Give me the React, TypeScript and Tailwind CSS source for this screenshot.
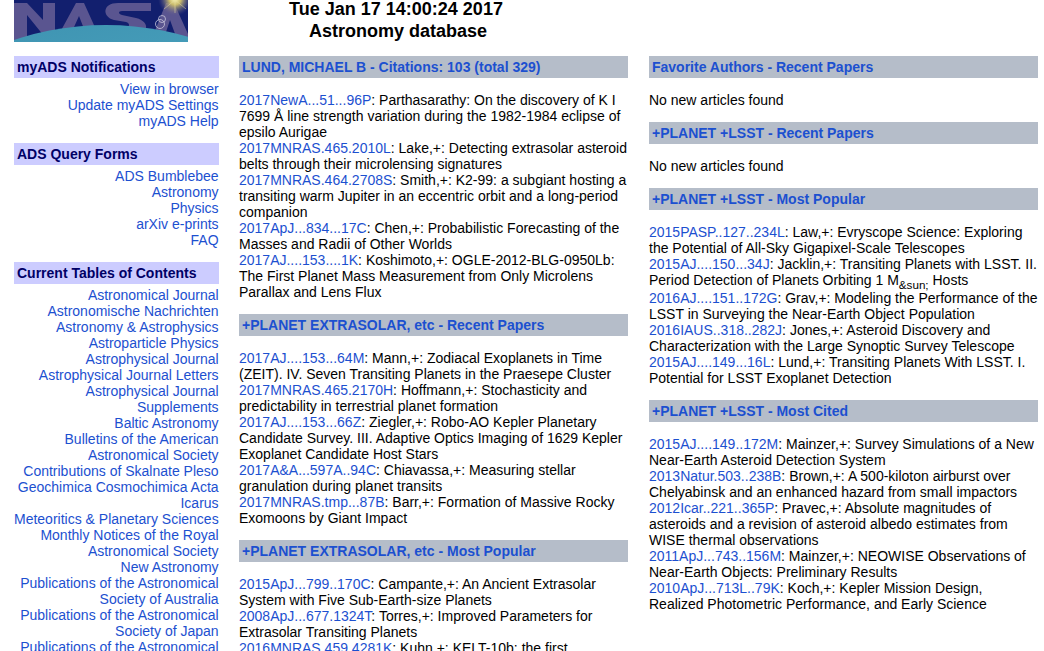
import { type ReactNode } from "react";

type Paper = { code: string; text: ReactNode };

const myads = ["View in browser", "Update myADS Settings", "myADS Help"];
const queryForms = ["ADS Bumblebee", "Astronomy", "Physics", "arXiv e-prints", "FAQ"];
const journals = [
  ["Astronomical Journal"],
  ["Astronomische Nachrichten"],
  ["Astronomy & Astrophysics"],
  ["Astroparticle Physics"],
  ["Astrophysical Journal"],
  ["Astrophysical Journal Letters"],
  ["Astrophysical Journal", "Supplements"],
  ["Baltic Astronomy"],
  ["Bulletins of the American", "Astronomical Society"],
  ["Contributions of Skalnate Pleso"],
  ["Geochimica Cosmochimica Acta"],
  ["Icarus"],
  ["Meteoritics & Planetary Sciences"],
  ["Monthly Notices of the Royal", "Astronomical Society"],
  ["New Astronomy"],
  ["Publications of the Astronomical", "Society of Australia"],
  ["Publications of the Astronomical", "Society of Japan"],
  ["Publications of the Astronomical", "Society of the Pacific"],
];

const citations: Paper[] = [
  { code: "2017NewA...51...96P", text: "Parthasarathy: On the discovery of K I 7699 Å line strength variation during the 1982-1984 eclipse of epsilo Aurigae" },
  { code: "2017MNRAS.465.2010L", text: "Lake,+: Detecting extrasolar asteroid belts through their microlensing signatures" },
  { code: "2017MNRAS.464.2708S", text: "Smith,+: K2-99: a subgiant hosting a transiting warm Jupiter in an eccentric orbit and a long-period companion" },
  { code: "2017ApJ...834...17C", text: "Chen,+: Probabilistic Forecasting of the Masses and Radii of Other Worlds" },
  { code: "2017AJ....153....1K", text: "Koshimoto,+: OGLE-2012-BLG-0950Lb: The First Planet Mass Measurement from Only Microlens Parallax and Lens Flux" },
];

const extraRecent: Paper[] = [
  { code: "2017AJ....153...64M", text: "Mann,+: Zodiacal Exoplanets in Time (ZEIT). IV. Seven Transiting Planets in the Praesepe Cluster" },
  { code: "2017MNRAS.465.2170H", text: "Hoffmann,+: Stochasticity and predictability in terrestrial planet formation" },
  { code: "2017AJ....153...66Z", text: "Ziegler,+: Robo-AO Kepler Planetary Candidate Survey. III. Adaptive Optics Imaging of 1629 Kepler Exoplanet Candidate Host Stars" },
  { code: "2017A&A...597A..94C", text: "Chiavassa,+: Measuring stellar granulation during planet transits" },
  { code: "2017MNRAS.tmp...87B", text: "Barr,+: Formation of Massive Rocky Exomoons by Giant Impact" },
];

const extraPopular: Paper[] = [
  { code: "2015ApJ...799..170C", text: "Campante,+: An Ancient Extrasolar System with Five Sub-Earth-size Planets" },
  { code: "2008ApJ...677.1324T", text: "Torres,+: Improved Parameters for Extrasolar Transiting Planets" },
  { code: "2016MNRAS.459.4281K", text: "Kuhn,+: KELT-10b: the first transiting exoplanet from the KELT-South survey" },
];

const lsstPopular: Paper[] = [
  { code: "2015PASP..127..234L", text: "Law,+: Evryscope Science: Exploring the Potential of All-Sky Gigapixel-Scale Telescopes" },
  {
    code: "2015AJ....150...34J",
    text: (
      <>
        Jacklin,+: Transiting Planets with LSST. II. Period Detection of Planets Orbiting 1 M
        <sub className="static align-sub text-[11.67px] leading-[11px]">&amp;sun;</sub> Hosts
      </>
    ),
  },
  { code: "2016AJ....151..172G", text: "Grav,+: Modeling the Performance of the LSST in Surveying the Near-Earth Object Population" },
  { code: "2016IAUS..318..282J", text: "Jones,+: Asteroid Discovery and Characterization with the Large Synoptic Survey Telescope" },
  { code: "2015AJ....149...16L", text: "Lund,+: Transiting Planets With LSST. I. Potential for LSST Exoplanet Detection" },
];

const lsstCited: Paper[] = [
  { code: "2015AJ....149..172M", text: "Mainzer,+: Survey Simulations of a New Near-Earth Asteroid Detection System" },
  { code: "2013Natur.503..238B", text: "Brown,+: A 500-kiloton airburst over Chelyabinsk and an enhanced hazard from small impactors" },
  { code: "2012Icar..221..365P", text: "Pravec,+: Absolute magnitudes of asteroids and a revision of asteroid albedo estimates from WISE thermal observations" },
  { code: "2011ApJ...743..156M", text: "Mainzer,+: NEOWISE Observations of Near-Earth Objects: Preliminary Results" },
  { code: "2010ApJ...713L..79K", text: "Koch,+: Kepler Mission Design, Realized Photometric Performance, and Early Science" },
];

function NasaLogo() {
  return (
    <svg width="174" height="42" viewBox="0 0 174 42" className="block shrink-0">
      <defs>
        <linearGradient id="planet" x1="0" y1="0" x2="0.25" y2="1">
          <stop offset="0%" stopColor="#3a8fae" />
          <stop offset="55%" stopColor="#5ab4cc" />
          <stop offset="100%" stopColor="#86d6e6" />
        </linearGradient>
        <radialGradient id="sun" cx="50%" cy="50%" r="50%">
          <stop offset="0%" stopColor="#fdf8b8" />
          <stop offset="35%" stopColor="#c9bb6c" />
          <stop offset="100%" stopColor="#5a5590" stopOpacity="0" />
        </radialGradient>
      </defs>
      <rect width="174" height="42" fill="#121f6e" />
      <g fill="#5a5590">
        {/* N */}
        <polygon points="0,3 13,3 29,20 29,3 41,3 41,36 30,36 13,15 13,40 0,40" />
        {/* A */}
        <polygon points="44,36 62,3 70,3 84,34 72,34 65,16 56,36" />
        {/* S */}
        <path d="M84 27 H112 C116 27 116 23 112 22 L100 20 C88 17 88 3 104 3 H137 V11 H108 C104 11 104 14 108 15 L122 18 C138 22 134 36 118 36 H84 Z" />
        {/* A */}
        <polygon points="138,38 152,3 160,3 174,34 174,42 164,42 156,20 150,38" />
      </g>
      <circle cx="92" cy="315" r="290" fill="url(#planet)" />
      <circle cx="161" cy="-1" r="17" fill="url(#sun)" />
      <g stroke="#e8e0a0" strokeWidth="0.7" opacity="0.7">
        <line x1="161" y1="0" x2="150" y2="9" />
        <line x1="161" y1="0" x2="172" y2="9" />
        <line x1="161" y1="0" x2="161" y2="13" />
      </g>
      <circle cx="146" cy="24" r="4.5" fill="none" stroke="#c9c6dc" strokeWidth="0.8" />
      <circle cx="148" cy="19" r="3.5" fill="none" stroke="#c9c6dc" strokeWidth="0.8" />
    </svg>
  );
}

function SideBox({ title, children }: { title: string; children: ReactNode }) {
  return (
    <section className="mb-[14px]">
      <h2 className="h-[22px] bg-[#ccccff] px-[3px] text-[14px] leading-[22px] font-bold text-[#000066]">{title}</h2>
      <div className="mt-[3px] pr-[0.4px] text-right text-[#1c50d0]">{children}</div>
    </section>
  );
}

function PaperBox({ title, papers }: { title: string; papers?: Paper[] }) {
  return (
    <section className="mb-[14px]">
      <h2 className="h-[22px] bg-[#b5bdc9] px-[3px] text-[14px] leading-[22px] font-bold text-[#1c50d0]">{title}</h2>
      <div className="mt-[14px]">
        {papers ? (
          papers.map((p) => (
            <div key={p.code}>
              <a className="text-[#1c50d0]">{p.code}</a>: {p.text}
            </div>
          ))
        ) : (
          <div>No new articles found</div>
        )}
      </div>
    </section>
  );
}

export default function App() {
  return (
    <div className="h-[651px] w-[1044px] overflow-hidden bg-white font-['Liberation_Sans',Arial,sans-serif] text-[14px] leading-4 text-black">
      <header className="flex h-[42px] pl-[14px]">
        <NasaLogo />
        <div className="-mt-[2px] w-[418px] text-center text-[18px] leading-[22px] font-bold">
          <div className="pr-[2px]">Tue Jan 17 14:00:24 2017</div>
          <div className="pl-[2px]">Astronomy database</div>
        </div>
      </header>

      <div className="mt-[14px] grid grid-cols-[205px_390px_389px] gap-x-5 pl-[14px]">
        <aside>
          <SideBox title="myADS Notifications">
            {myads.map((x) => (
              <div key={x}>{x}</div>
            ))}
          </SideBox>
          <SideBox title="ADS Query Forms">
            {queryForms.map((x) => (
              <div key={x}>{x}</div>
            ))}
          </SideBox>
          <SideBox title="Current Tables of Contents">
            {journals.flat().map((x, i) => (
              <div key={i} className="whitespace-nowrap">
                {x}
              </div>
            ))}
          </SideBox>
        </aside>

        <main className="pr-px">
          <PaperBox title="LUND, MICHAEL B - Citations: 103 (total 329)" papers={citations} />
          <PaperBox title="+PLANET EXTRASOLAR, etc - Recent Papers" papers={extraRecent} />
          <PaperBox title="+PLANET EXTRASOLAR, etc - Most Popular" papers={extraPopular} />
        </main>

        <div>
          <PaperBox title="Favorite Authors - Recent Papers" />
          <PaperBox title="+PLANET +LSST - Recent Papers" />
          <PaperBox title="+PLANET +LSST - Most Popular" papers={lsstPopular} />
          <PaperBox title="+PLANET +LSST - Most Cited" papers={lsstCited} />
        </div>
      </div>
    </div>
  );
}
